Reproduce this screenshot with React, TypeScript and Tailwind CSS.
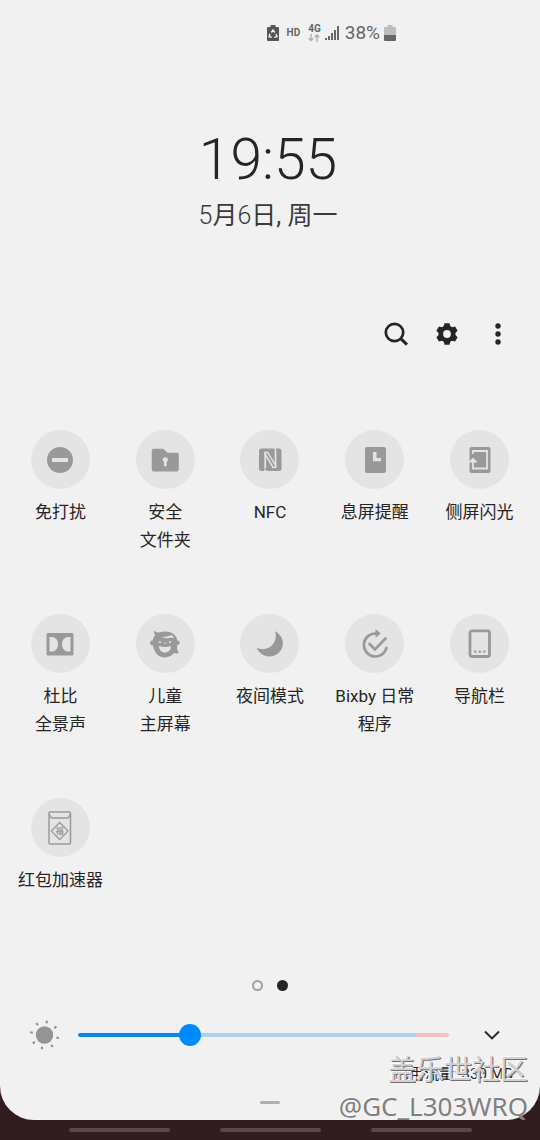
import React, { useState } from "react";

const G = "#999999";
const BG = "#e4e4e4";

const DoNotDisturb = () => (
  <>
    <circle cx="15" cy="15" r="13" fill={G} />
    <rect x="7" y="13" width="16" height="4" fill={BG} />
  </>
);
const SecureFolder = () => (
  <>
    <path d="M3.500 3.800h9.600l4.400 4H27a1.800 1.800 0 0 1 1.800 1.800v15a1.800 1.800 0 0 1-1.800 1.800H3.500a1.800 1.800 0 0 1-1.800-1.800V5.600a1.800 1.800 0 0 1 1.800-1.800Z" fill={G} />
    <path d="M15.200 12.200a2.500 2.500 0 0 0-1.200 4.700v4.300h2.600v-4.300a2.500 2.500 0 0 0-1.400-4.700Z" fill={BG} />
  </>
);
const Nfc = () => (
  <>
    <rect x="4" y="3.500" width="22.500" height="22.500" rx="2.500" fill={G} />
    <path d="M10.200 23.500V6.500M20.500 6v17" fill="none" stroke={BG} strokeWidth="1.700" />
    <path d="m10.800 7.500 9.200 15" fill="none" stroke={BG} strokeWidth="4.600" />
    <path d="m11.500 8.500 8 13" fill="none" stroke={G} strokeWidth="1.500" />
    <path d="M9.500 24.500c.3 1 .9 1.500 1.800 1.700M19.300 3.300c1 .4 1.300 1.200 1.300 2.700" fill="none" stroke={BG} strokeWidth="1.500" />
  </>
);
const AlwaysOn = () => (
  <>
    <rect x="5" y="2" width="21" height="26" rx="2" fill={G} />
    <path d="M13 7v9.200h8V13h-4.500V7Z" fill={BG} />
  </>
);
const EdgeLight = () => (
  <>
    <rect x="4.500" y="2" width="21" height="26" rx="2" fill={G} />
    <path d="M8 9V6h14v17.500H8V16" fill="none" stroke={BG} strokeWidth="1.800" />
    <path d="M4 16.500 8 12.800l4 3.700v1H4Z" fill={BG} />
  </>
);
const Dolby = () => (
  <>
    <rect x="1.500" y="4" width="27" height="22.500" rx="1.500" fill={G} />
    <path d="M4.500 8h2c4 0 6.500 3 6.500 7.200s-2.500 7.300-6.500 7.300h-2ZM25.500 8h-2c-4 0-6.500 3-6.500 7.200s2.500 7.300 6.500 7.300h2Z" fill={BG} />
  </>
);
const KidsHome = () => (
  <>
    <path d="M4 1.500c1.200 1.500 3 2 5 2.100C15 1.500 22 2.500 25.500 7c1.200 1.500 1.600 3 1.700 4.500 2 .1 2.500 1.200 2.500 2.300s-1 2-2.500 2.200c-.1 2.500-.2 4 .3 5.500.4 1 1 1.500 1.800 2-1.800 1.200-3.800 1.300-5.300.6C21.500 27 18.500 28.500 15 28.500c-6.800 0-11-5.500-12-12-1.500-.2-3-.8-3-2.700 0-1.600 1.300-2.300 2.800-2.500.2-2 1.200-4 2.400-5.300C4 4.800 3.700 3.200 4 1.500Z" fill={G} />
    <path d="M12 7.700c3.500.5 7-.2 9.500-1.700 1.500.8 2.300 2 2.800 3.500-1-.7-2-1-3-1-2.500 1.200-6.500 1-9.300-.8Z" fill={BG} />
    <path d="M9 17c4 1.200 8 1.200 12 0 0 4-2.500 6.500-6 6.500s-6-2.500-6-6.500Z" fill={BG} />
    <circle cx="10" cy="13" r="1.100" fill={BG} />
    <circle cx="20" cy="13" r="1.100" fill={BG} />
    <circle cx="15" cy="14" r=".8" fill={BG} />
  </>
);
const NightMode = () => (
  <path d="M20 2.300c6.200 3.100 9.500 9.600 7.200 16.200-2 6-7.500 9.200-13.200 8.900-5.600-.3-10-3.300-12.300-8.400 6.500 2.500 13 .8 16.600-4.300 2.700-3.900 3.200-8 1.700-12.400Z" fill={G} />
);
const Routine = () => (
  <>
    <path d="M17.500 4.500H14.500a11.500 11.500 0 1 0 12 14.400" fill="none" stroke={G} strokeWidth="2.600" strokeLinecap="round" />
    <path d="M15.500 0v8.800l5.300-4.400Z" fill={G} />
    <path d="m9.500 15 5.500 5.500L25.500 9.500" fill="none" stroke={G} strokeWidth="2.600" strokeLinecap="round" />
  </>
);
const NavBar = () => (
  <>
    <rect x="5" y="1.800" width="19.500" height="25.700" rx="2" fill="none" stroke={G} strokeWidth="2.800" />
    <path d="M9.200 21.500h2.200v2.200H9.200ZM13.700 21.500h2.200v2.200h-2.200ZM18.200 21.500h2.200v2.200h-2.200Z" fill={G} />
  </>
);
const RedPacket = () => (
  <>
    <rect x="4" y="-1" width="21.500" height="32" rx="1" fill="none" stroke={G} strokeWidth="1.500" />
    <path d="M4 1 6.500 5H23L25.500 1M14.700 9.500l8.300 8.600-8.300 8.400-8.400-8.400Z" fill="none" stroke={G} strokeWidth="1.300" />
    <text x="14.700" y="21.200" textAnchor="middle" fontSize="8" fontWeight="700" fill={G}>福</text>
  </>
);

type Tile = { icon: () => React.JSX.Element; lines: string[] };
const tiles: Tile[] = [
  { icon: DoNotDisturb, lines: ["免打扰"] },
  { icon: SecureFolder, lines: ["安全", "文件夹"] },
  { icon: Nfc, lines: ["NFC"] },
  { icon: AlwaysOn, lines: ["息屏提醒"] },
  { icon: EdgeLight, lines: ["侧屏闪光"] },
  { icon: Dolby, lines: ["杜比", "全景声"] },
  { icon: KidsHome, lines: ["儿童", "主屏幕"] },
  { icon: NightMode, lines: ["夜间模式"] },
  { icon: Routine, lines: ["Bixby 日常", "程序"] },
  { icon: NavBar, lines: ["导航栏"] },
  { icon: RedPacket, lines: ["红包加速器"] },
];

function StatusBar() {
  return (
    <div className="flex h-[66px] items-center justify-end gap-1 pr-36 text-[#666666]">
      <svg className="mr-1 h-4 w-3" viewBox="0 0 12 16" aria-hidden="true">
        <path d="M3.500 0h5v2H11a1 1 0 0 1 1 1v12a1 1 0 0 1-1 1H1a1 1 0 0 1-1-1V3a1 1 0 0 1 1-1h2.500Z" fill="#555" />
        <path d="M4.300 7.500 6 5l1.700 2.500M9 9l1 2.500-2.700.8M4.800 12.300 2 11.800l1-3" fill="none" stroke="#f1f1f1" strokeWidth="1.400" />
      </svg>
      <span className="mr-1 text-[10px] font-bold leading-4">HD</span>
      <div className="flex flex-col items-center">
        <span className="text-[10px] font-bold leading-[10px]">4G</span>
        <svg className="h-2 w-3" viewBox="0 0 12 8" fill="none" stroke="#aaa" strokeWidth="1.300" aria-hidden="true">
          <path d="M3 0v6.500M.7 4.300 3 6.600l2.300-2.300M9 8V1M6.700 3.300 9 1l2.300 2.300" />
        </svg>
      </div>
      <svg className="h-4 w-4" viewBox="0 0 16 16" fill="#666" aria-hidden="true">
        <path d="M0 13h2v2H0ZM3 11h2v4H3ZM6 8h2v7H6ZM9 5h2v10H9ZM12 1h2v14h-2Z" />
      </svg>
      <span className="text-[19px] leading-6">38%</span>
      <svg className="h-4 w-3" viewBox="0 0 12 16" aria-hidden="true">
        <path d="M3.500 0h5v2H11a1 1 0 0 1 1 1v7H0V3a1 1 0 0 1 1-1h2.500Z" fill="#bdbdbd" />
        <path d="M0 10h12v5a1 1 0 0 1-1 1H1a1 1 0 0 1-1-1Z" fill="#666" />
      </svg>
    </div>
  );
}

export default function App() {
  const [brightness, setBrightness] = useState(29);
  return (
    <div className="bg-[#311c1f] font-[Roboto,'Noto_Sans_CJK_SC',sans-serif] text-[#252525]">
      <main className="relative rounded-b-[34px] bg-[#f1f1f1]">
        <StatusBar />
        <header className="flex flex-col items-center pt-15 pr-1">
          <h1 className="text-[57px] font-light leading-[68px]">19:55</h1>
          <p className="pt-1 text-[25px] font-light leading-9 whitespace-pre text-[#3a3a3a]">
            5<span className="font-normal">月</span>6<span className="font-normal">日, 周一</span>
          </p>
        </header>

        <div className="flex justify-end gap-[23px] pt-[86px] pr-7">
          <button type="button" aria-label="搜索">
            <svg className="size-7" viewBox="0 0 28 28" fill="none" stroke="#252525" strokeWidth="2.700">
              <circle cx="12.500" cy="12.500" r="8.700" />
              <path d="m18.700 18.700 6.300 6" strokeWidth="3" />
            </svg>
          </button>
          <button type="button" aria-label="设置">
            <svg className="size-7" viewBox="0 0 28 28" aria-hidden="true">
              <g fill="#252525">
                <circle cx="14" cy="14" r="8.500" />
                <path d="M11.500 3.200h5l1 4h-7ZM11.500 24.800h5l1-4h-7Z" />
                <path d="M11.500 3.200h5l1 4h-7ZM11.500 24.800h5l1-4h-7Z" transform="rotate(60 14 14)" />
                <path d="M11.500 3.200h5l1 4h-7ZM11.500 24.800h5l1-4h-7Z" transform="rotate(120 14 14)" />
              </g>
              <circle cx="14" cy="14" r="3.900" fill="#f1f1f1" />
            </svg>
          </button>
          <button type="button" aria-label="更多选项">
            <svg className="size-7" viewBox="0 0 28 28" fill="#252525">
              <circle cx="14" cy="6" r="2.700" />
              <circle cx="14" cy="14" r="2.700" />
              <circle cx="14" cy="22" r="2.700" />
            </svg>
          </button>
        </div>

        <section className="grid auto-rows-[160px] grid-cols-5 gap-y-6 px-2 pt-[82px] pb-[22px]">
          {tiles.map(({ icon: Icon, lines }) => (
            <button key={lines.join("")} type="button" className="flex flex-col items-center">
              <span className="flex size-[59px] items-center justify-center rounded-full bg-[#e4e4e4]">
                <svg className="size-[30px] overflow-visible" viewBox="0 0 30 30" aria-hidden="true">
                  <Icon />
                </svg>
              </span>
              <span className="flex flex-col pt-[9px] text-[17px] leading-7 whitespace-nowrap">
                {lines.map((line) => (
                  <span key={line}>{line}</span>
                ))}
              </span>
            </button>
          ))}
        </section>

        <nav className="flex justify-center gap-[14px]" aria-label="页面">
          <button type="button" aria-label="第 1 页" className="size-[11px] rounded-full border-2 border-[#a0a0a0]" />
          <button type="button" aria-label="第 2 页" className="size-[11px] rounded-full bg-[#252525]" />
        </nav>

        <div className="flex items-center pt-[29px] pr-10 pl-[29px]">
          <svg className="h-[30px] w-[30px] shrink-0" viewBox="0 0 30 30" aria-hidden="true">
            <circle cx="15.500" cy="15" r="8.700" fill="#949494" />
            <path d="m18 .8-.5 2.600M27.500 6.700l-2.200 1.500M30 17.900l-2.600-.5M23.700 27l-1.500-2.200M12.700 29.300l.5-2.600M3.700 23.300l2.200-1.500M1.200 12.200l2.600.5M7.300 3l1.500 2.200" stroke="#8d8d8d" strokeWidth="2" />
          </svg>
          <input
            type="range"
            aria-label="亮度"
            min={0}
            max={100}
            value={brightness}
            onChange={(e) => setBrightness(Number(e.target.value))}
            style={{ "--v": `${brightness}%` } as React.CSSProperties}
            className="mx-[19px] h-6 min-w-0 flex-1 appearance-none bg-transparent [&::-webkit-slider-runnable-track]:h-1 [&::-webkit-slider-runnable-track]:rounded-full [&::-webkit-slider-runnable-track]:bg-[linear-gradient(to_right,#0d86e6_var(--v),#aed2ed_var(--v),#aed2ed_91%,#f0c2c2_91%)] [&::-webkit-slider-thumb]:-mt-[9px] [&::-webkit-slider-thumb]:size-[22px] [&::-webkit-slider-thumb]:appearance-none [&::-webkit-slider-thumb]:rounded-full [&::-webkit-slider-thumb]:bg-[#008aff]"
          />
          <button type="button" aria-label="展开" className="ml-4">
            <svg className="h-4 w-4" viewBox="0 0 16 16" fill="none" stroke="#252525" strokeWidth="1.900">
              <path d="m1 4.500 7 7 7-7" />
            </svg>
          </button>
        </div>

        <div className="flex h-[70px] items-end justify-center pb-4">
          <span className="h-[3px] w-5 rounded-full bg-[#b0b0b0]" />
        </div>

        <p className="absolute right-[27px] bottom-[34px] text-[15px] leading-6 whitespace-nowrap">已用流量: 330 MB</p>
        <div className="absolute right-3 -bottom-1 flex flex-col items-end font-['Noto_Sans','Noto_Sans_CJK_SC',sans-serif] whitespace-nowrap">
          <span className="text-[28px] leading-[38px] text-[#d2d2d2] [text-shadow:1px_1px_0_#707070,-1px_-1px_0_#fafafa]">盖乐世社区</span>
          <span className="text-[26px] leading-9 text-[#808080] [text-shadow:-1px_-1px_0_#fafafa]">@GC_L303WRQ</span>
        </div>
      </main>
      <footer className="flex h-5 items-center justify-center gap-[50px]">
        <span className="h-1 w-[101px] rounded-full bg-[#5a494b]" />
        <span className="h-1 w-[101px] rounded-full bg-[#5a494b]" />
        <span className="h-1 w-[101px] rounded-full bg-[#5a494b]" />
      </footer>
    </div>
  );
}
